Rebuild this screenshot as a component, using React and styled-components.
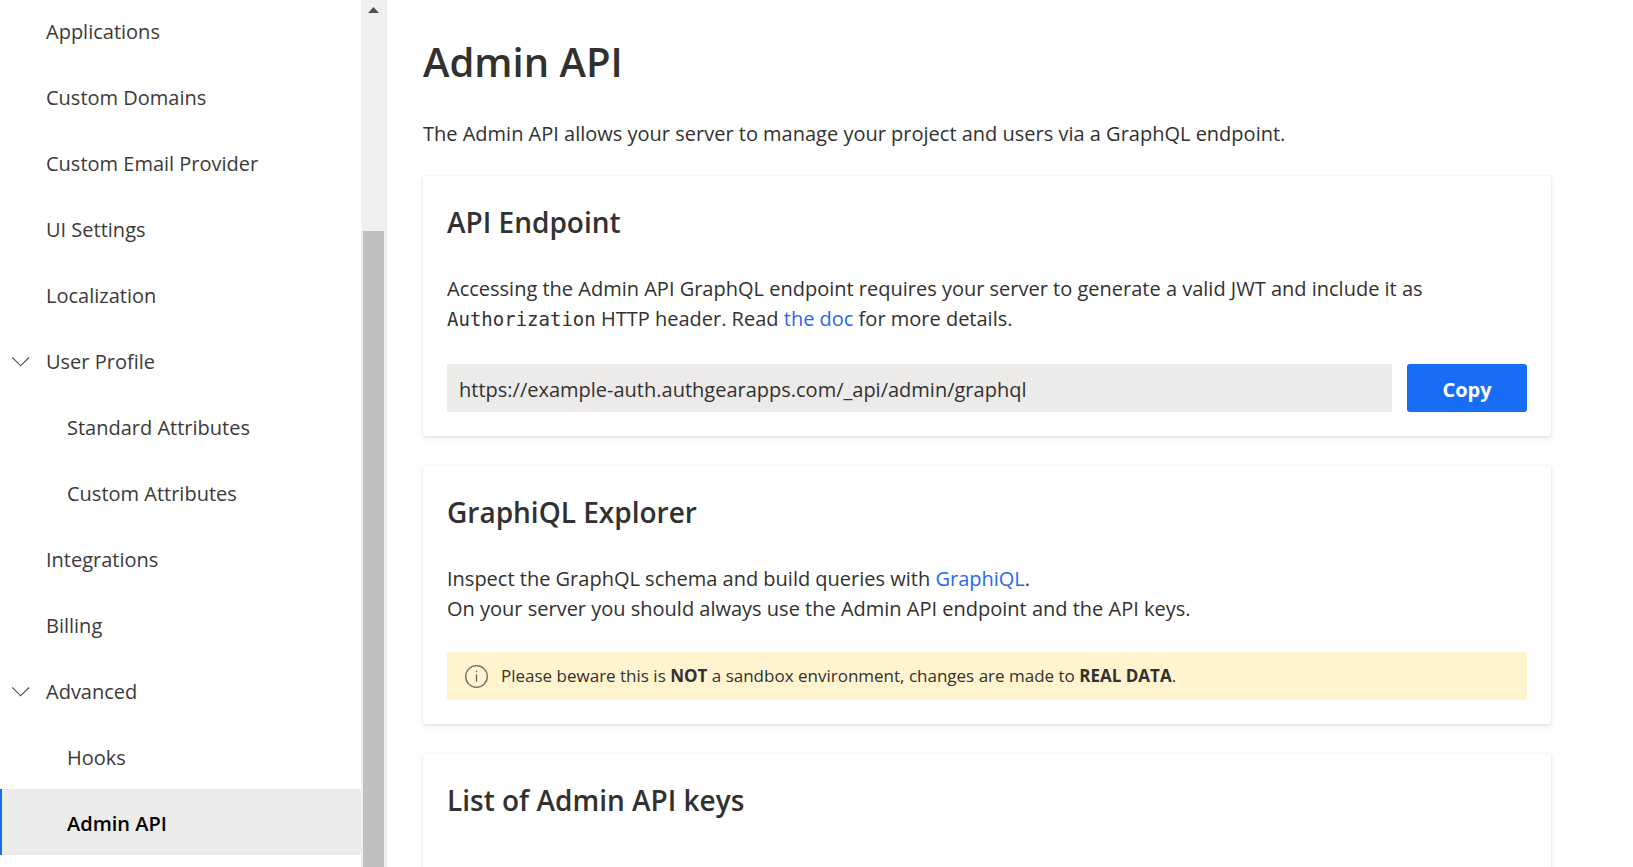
import React from "react";
import styled, { createGlobalStyle } from "styled-components";

const GlobalStyle = createGlobalStyle`
  *, *::before, *::after { box-sizing: border-box; }
  body {
    margin: 0;
    overflow: hidden;
    background: #ffffff;
    color: #323130;
    font-family: "Segoe UI", "Open Sans", "Noto Sans", sans-serif;
    font-size: 20px;
    line-height: 30px;
  }
  h1, h2, p, ul { margin: 0; padding: 0; }
`;

const Page = styled.div`
  display: flex;
  height: 100vh;
  overflow: hidden;
`;

const Sidebar = styled.aside`
  display: flex;
  flex: none;
  border-right: 1px solid #e8e8e8;
`;

const Nav = styled.nav`
  width: 361px;
  overflow: hidden;
`;

const NavList = styled.ul`
  margin-top: -3px;
  list-style: none;
`;

const NavLink = styled.a`
  display: flex;
  align-items: center;
  height: 66px;
  padding-left: ${(p) => (p.$nested ? 67 : 46)}px;
  padding-top: 4px;
  border-radius: 3px;
  color: #3b3a39;
  text-decoration: none;

  &[aria-current="page"] {
    border-radius: 0 3px 3px 0;
    background: #edebe9;
    box-shadow: inset 2px 0 0 #176df3;
    color: #000000;
    font-weight: 600;
  }
`;

const NavGroup = styled.button`
  display: flex;
  align-items: center;
  gap: 16px;
  width: 100%;
  height: 66px;
  padding: 4px 0 0 12px;
  border: 0;
  background: none;
  color: #3b3a39;
  font: inherit;
  text-align: left;
`;

const Scrollbar = styled.div`
  display: flex;
  flex-direction: column;
  align-items: center;
  width: 25px;
  padding: 7px 2px 0;
  background: #f0f0f0;
`;

const ScrollArrow = styled.svg`
  flex: none;
  width: 11px;
  height: 6px;
  margin-bottom: 218px;
`;

const ScrollThumb = styled.div`
  flex: 1;
  width: 100%;
  background: #c0c0c0;
`;

const Main = styled.main`
  flex: 1;
  min-width: 0;
  padding: 36px 82px 0 36px;
`;

const Title = styled.h1`
  margin-bottom: 31px;
  font-size: 40px;
  line-height: 52px;
  font-weight: 600;
`;

const Intro = styled.p`
  margin-bottom: 27px;
`;

const Card = styled.section`
  display: flex;
  flex-direction: column;
  gap: 30px;
  margin-bottom: 30px;
  padding: 24px;
  border-radius: 2px;
  background: #ffffff;
  box-shadow: 0 2px 5px rgba(0, 0, 0, 0.11), 0 0 2px rgba(0, 0, 0, 0.09);
`;

const CardTitle = styled.h2`
  font-size: 28px;
  line-height: 44px;
  font-weight: 600;
`;

const CardBody = styled.div`
  display: flex;
  flex-direction: column;
  gap: 28px;
`;

const KeyList = styled.div`
  min-height: 240px;
`;

const Code = styled.code`
  font-family: Consolas, "DejaVu Sans Mono", monospace;
  font-size: 19px;
  line-height: 20px;
`;

const Link = styled.a`
  color: #2a65f5;
  text-decoration: none;
`;

const FieldRow = styled.div`
  display: flex;
  gap: 15px;
`;

const EndpointInput = styled.input`
  flex: 1;
  min-width: 0;
  height: 48px;
  padding: 2px 12px 0;
  border: 0;
  border-radius: 0;
  background: #edebe9;
  color: inherit;
  font: inherit;
`;

const PrimaryButton = styled.button`
  width: 120px;
  height: 48px;
  padding: 4px 0 0;
  border: 0;
  border-radius: 3px;
  background: #176df3;
  color: #ffffff;
  font: inherit;
  font-weight: 700;
`;

const MessageBar = styled.div`
  display: flex;
  align-items: center;
  gap: 13px;
  height: 48px;
  padding: 0 18px;
  background: #fff4ce;
  font-size: 17px;
  line-height: 24px;
`;

const InfoSvg = styled.svg`
  flex: none;
  width: 23px;
  height: 23px;
`;

const ChevronDown = () => (
  <svg width="18" height="10" viewBox="0 0 18 10" fill="none" stroke="#4a4948" strokeWidth="1.1" aria-hidden="true">
    <path d="M0.2 0.5 8.6 8.8 17 0.5" />
  </svg>
);

const InfoIcon = () => (
  <InfoSvg viewBox="0 0 23 23" fill="none" stroke="#6b6967" strokeWidth="1.3" aria-hidden="true">
    <circle cx="11.5" cy="11.5" r="10.8" />
    <path d="M11.5 9.2v7.6M11.5 5.7v1.6" />
  </InfoSvg>
);

const items = [
  { label: "Applications" },
  { label: "Custom Domains" },
  { label: "Custom Email Provider" },
  { label: "UI Settings" },
  { label: "Localization" },
  { label: "User Profile", group: true },
  { label: "Standard Attributes", nested: true },
  { label: "Custom Attributes", nested: true },
  { label: "Integrations" },
  { label: "Billing" },
  { label: "Advanced", group: true },
  { label: "Hooks", nested: true },
  { label: "Admin API", nested: true, current: true },
];

export default function App() {
  return (
    <>
      <GlobalStyle />
      <Page>
        <Sidebar>
          <Nav aria-label="Project">
            <NavList>
              {items.map((item) => (
                <li key={item.label}>
                  {item.group ? (
                    <NavGroup type="button" aria-expanded="true">
                      <ChevronDown />
                      {item.label}
                    </NavGroup>
                  ) : (
                    <NavLink href="#" $nested={item.nested} aria-current={item.current ? "page" : undefined}>
                      {item.label}
                    </NavLink>
                  )}
                </li>
              ))}
            </NavList>
          </Nav>
          <Scrollbar aria-hidden="true">
            <ScrollArrow viewBox="0 0 11 6">
              <path d="M5.5 0 11 6H0z" fill="#505050" />
            </ScrollArrow>
            <ScrollThumb />
          </Scrollbar>
        </Sidebar>
        <Main>
          <Title>Admin API</Title>
          <Intro>The Admin API allows your server to manage your project and users via a GraphQL endpoint.</Intro>
          <Card>
            <CardTitle>API Endpoint</CardTitle>
            <p>
              Accessing the Admin API GraphQL endpoint requires your server to generate a valid JWT and include it as{" "}
              <Code>Authorization</Code> HTTP header. Read <Link href="#">the doc</Link> for more details.
            </p>
            <FieldRow>
              <EndpointInput
                type="text"
                readOnly
                aria-label="API Endpoint"
                value="https://example-auth.authgearapps.com/_api/admin/graphql"
              />
              <PrimaryButton type="button">Copy</PrimaryButton>
            </FieldRow>
          </Card>
          <Card>
            <CardTitle>GraphiQL Explorer</CardTitle>
            <CardBody>
              <p>
                Inspect the GraphQL schema and build queries with <Link href="#">GraphiQL</Link>.
                <br />
                On your server you should always use the Admin API endpoint and the API keys.
              </p>
              <MessageBar role="note">
                <InfoIcon />
                <span>
                  Please beware this is <b>NOT</b> a sandbox environment, changes are made to <b>REAL DATA</b>.
                </span>
              </MessageBar>
            </CardBody>
          </Card>
          <Card>
            <CardTitle>List of Admin API keys</CardTitle>
            <KeyList />
          </Card>
        </Main>
      </Page>
    </>
  );
}
